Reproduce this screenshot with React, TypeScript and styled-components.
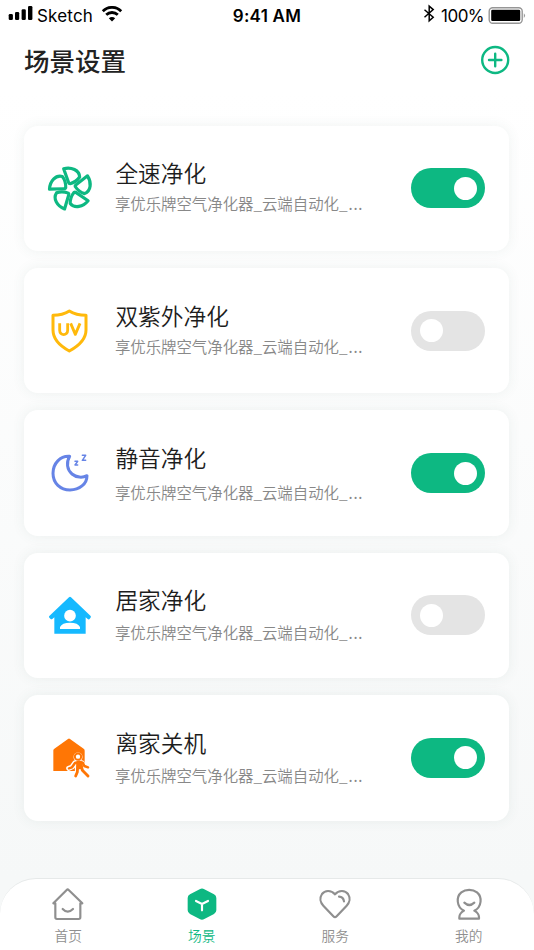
import React, { useState } from "react";
import styled, { createGlobalStyle } from "styled-components";

const GREEN = "#0db882";

const GlobalStyle = createGlobalStyle`
  * { box-sizing: border-box; }
  body { margin: 0; background: #fff; font-family: "Noto Sans CJK SC", sans-serif; }
`;

const Screen = styled.div`
  width: 534px;
  height: 950px;
  display: flex;
  flex-direction: column;
  overflow: hidden;
  background: linear-gradient(180deg, #ffffff 0, #ffffff 90px, #f6f8f8 880px);
`;

const StatusBar = styled.header`
  display: grid;
  grid-template-columns: 1fr auto 1fr;
  align-items: center;
  height: 32px;
  padding: 0 8px;
  color: #000;
  font-family: Inter, sans-serif;
  font-size: 17px;
  line-height: 32px;
`;

const StatusGroup = styled.div<{ $end?: boolean }>`
  display: flex;
  align-items: center;
  height: 32px;
  justify-content: ${(p) => (p.$end ? "flex-end" : "flex-start")};
`;

const Carrier = styled.span`
  width: 65px;
  padding-left: 4px;
  letter-spacing: 0.2px;
`;

const Clock = styled.span`
  font-weight: 600;
  letter-spacing: 0.25px;
`;

const Percent = styled.span`
  width: 48px;
  padding-left: 1px;
  letter-spacing: -0.5px;
`;

const Glyph = styled.svg<{ $w: number; $h: number }>`
  display: block;
  flex: none;
  width: ${(p) => p.$w}px;
  height: ${(p) => p.$h}px;
`;

const SignalGlyph = styled(Glyph)`
  margin-bottom: 6px;
`;

const TitleBar = styled.div`
  display: flex;
  align-items: center;
  justify-content: space-between;
  height: 56px;
  padding: 0 24px;
`;

const PageTitle = styled.h1`
  margin: 0;
  color: #222;
  font-size: 25.5px;
  font-weight: 500;
  line-height: 38px;
`;

const AddButton = styled.button`
  width: 30px;
  height: 30px;
  padding: 0;
  border: 0;
  background: none;
`;

const SceneList = styled.main`
  flex: 1;
  display: flex;
  flex-direction: column;
  gap: 17px;
  padding: 37.6px 24.6px 0 24.4px;
`;

const SceneCard = styled.section`
  display: flex;
  align-items: center;
  height: 125.4px;
  padding: 0 24px 0 16px;
  border-radius: 14px;
  background: #fff;
  box-shadow: 0 0 13px rgba(70, 100, 90, 0.08);
`;

const SceneText = styled.div`
  flex: 1;
  height: 90px;
  padding: 13px 0 0 5px;
`;

const SceneName = styled.h2`
  margin: 0;
  color: #1d1d1d;
  font-size: 22.7px;
  font-weight: 350;
  line-height: 33px;
`;

const SceneDescription = styled.p<{ $gap: number }>`
  margin: ${(p) => p.$gap}px 0 0 -0.5px;
  color: #888;
  font-size: 15.4px;
  font-weight: 350;
  line-height: 24px;
  white-space: nowrap;
`;

const Ellipsis = styled.span`
  margin-left: 1px;
  font-family: "Noto Sans", sans-serif;
  font-weight: 400;
  letter-spacing: 0.8px;
`;

const Switch = styled.button<{ $on: boolean }>`
  display: flex;
  align-items: center;
  justify-content: ${(p) => (p.$on ? "flex-end" : "flex-start")};
  width: 74px;
  height: 40px;
  padding: 0 8.5px;
  border: 0;
  border-radius: 20px;
  background: ${(p) => (p.$on ? GREEN : "#e4e4e4")};
`;

const Knob = styled.span`
  width: 23px;
  height: 23px;
  border-radius: 50%;
  background: #fff;
`;

const TabBar = styled.nav`
  display: grid;
  grid-template-columns: repeat(4, 1fr);
  height: 72px;
  border-top: 1px solid #e6e9e9;
  border-radius: 36px 36px 0 0;
  background: #fff;
`;

const Tab = styled.a<{ $active?: boolean }>`
  display: flex;
  flex-direction: column;
  align-items: center;
  padding-top: 6px;
  color: ${(p) => (p.$active ? GREEN : "#8f8f8f")};
  font-size: 13.7px;
  font-weight: 350;
  line-height: 20px;
  padding-left: 3px;
`;

const TabLabel = styled.span`
  margin-top: 1.5px;
`;

const BLADE = "M70 42 C93 36 117 46 118 67 Q108 82 89 87 Q86 87 85 84 Z";

function FanIcon() {
  return (
    <Glyph $w={70} $h={70} viewBox="-1 -5 210 210" fill="none" stroke={GREEN} strokeWidth="9.5" strokeLinejoin="round">
      {[0, 72, 144, 216, 288].map((a) => (
        <path key={a} d={BLADE} transform={`rotate(${a} 91 102)`} />
      ))}
    </Glyph>
  );
}

function ShieldIcon() {
  return (
    <Glyph $w={70} $h={70} viewBox="0 1 210 210" fill="none" stroke="#ffb90b" strokeLinejoin="round">
      <path d="M88 46 Q68 59 39 59 V103 C39 133 64 153 88 166 C112 153 138 133 138 103 V59 Q108 59 88 46 Z" strokeWidth="9" />
      <path d="M59 83 V104 C59 121 83 121 83 104 V83 M92 83 L106 116 L120 83" strokeWidth="8.5" />
    </Glyph>
  );
}

function MoonIcon() {
  return (
    <Glyph $w={70} $h={70} viewBox="0 -6 210 210" fill="none" stroke="#6684e6" strokeLinejoin="round" strokeLinecap="round">
      <path d="M89 49 C61 47 39 70 39 100 C39 130 61 150 90 150 C118 150 141 132 141 107 C128 114 109 113 96 102 C81 89 78 68 89 49 Z" strokeWidth="9" />
      <path d="M105 64 H113 L105 75 H113 M127 46 H137 L127 61 H137" strokeWidth="4.5" />
    </Glyph>
  );
}

function HomeIcon() {
  return (
    <Glyph $w={70} $h={70} viewBox="0 -14 210 210">
      <path d="M87 38 Q90 35 93 38 L152 94 Q154 97 151 100 L148 104 Q145 105 143 103 L137 98 V147 H43 V98 L37 103 Q34 105 31 102 L27 98 Q26 96 28 94 Z" fill="#15b9ff" />
      <circle cx="90" cy="93" r="17.5" fill="#fff" />
      <path d="M60 133 V127 Q66 114 90 114 Q114 114 120 127 V133 Z" fill="#fff" />
    </Glyph>
  );
}

function LeaveIcon() {
  return (
    <Glyph $w={70} $h={70} viewBox="0 -6 210 210" strokeLinejoin="round" strokeLinecap="round">
      <path d="M84 42 Q87 39 90 42 L132 72 Q134 74 134 77 V138 H40 V76 Q40 74 42 72 Z" fill="#ff7605" />
      <path d="M86 130 L96 126 L105 113 L126 113 L130 124 L145 127 M112 118 L112 141 L106 155 M124 120 L127 136 L145 155" fill="none" stroke="#fff" strokeWidth="15" />
      <circle cx="114" cy="96" r="13.5" fill="#fff" />
      <circle cx="114" cy="95" r="9.5" fill="#fff" stroke="#ff7605" strokeWidth="6" />
      <path d="M87 130 L96 127 L105 114 L118 110 L128 113 L133 123 L144 127" fill="none" stroke="#ff7605" strokeWidth="7.5" />
      <path d="M113 116 L112 141 L107 153 M123 119 L127 136 L144 153" fill="none" stroke="#ff7605" strokeWidth="8.5" />
      <path d="M110 112 L126 112 L130 136 L121 132 L110 135 Z" fill="#ff7605" />
    </Glyph>
  );
}

const scenes = [
  { name: "全速净化", icon: FanIcon, gap: 2, on: true },
  { name: "双紫外净化", icon: ShieldIcon, gap: 2.5, on: false },
  { name: "静音净化", icon: MoonIcon, gap: 5.9, on: true },
  { name: "居家净化", icon: HomeIcon, gap: 3.5, on: false },
  { name: "离家关机", icon: LeaveIcon, gap: 4.4, on: true },
];

function Scene({ name, icon: Icon, gap, on }: (typeof scenes)[number]) {
  const [active, setActive] = useState(on);
  return (
    <SceneCard>
      <Icon />
      <SceneText>
        <SceneName>{name}</SceneName>
        <SceneDescription $gap={gap}>
          享优乐牌空气净化器_云端自动化_<Ellipsis>...</Ellipsis>
        </SceneDescription>
      </SceneText>
      <Switch $on={active} role="switch" aria-checked={active} onClick={() => setActive(!active)}>
        <Knob />
      </Switch>
    </SceneCard>
  );
}

export default function App() {
  return (
    <>
      <GlobalStyle />
      <Screen>
        <StatusBar>
          <StatusGroup>
            <SignalGlyph $w={25} $h={16} viewBox="0 0 25 16">
              <rect x="0.7" y="9" width="4.2" height="6" rx="1.3" />
              <rect x="7" y="7" width="4.2" height="8" rx="1.3" />
              <rect x="13.6" y="4.2" width="4.2" height="10.8" rx="1.3" />
              <rect x="20" y="1" width="4.4" height="14" rx="1.3" />
            </SignalGlyph>
            <Carrier>Sketch</Carrier>
            <Glyph $w={28} $h={20} viewBox="0 5 28 20" fill="none" stroke="#000" strokeWidth="2.8">
              <path d="M4.8 10.2 C10 5.1 18 5.1 23.2 10.2 M8.2 13.8 C11.5 10.7 16.5 10.7 19.8 13.8" />
              <path d="M10.8 17.2 Q14 14.7 17.2 17.2 L14 20.4 Z" fill="#000" stroke="none" />
            </Glyph>
          </StatusGroup>
          <Clock>9:41 AM</Clock>
          <StatusGroup $end>
            <Glyph $w={17} $h={24} viewBox="0 1 17 24" fill="none" stroke="#000" strokeWidth="1.5">
              <path d="M1.5 6.8 L10.2 14.3 L6.2 17.8 V3.2 L10.2 6.6 L1.5 14.2" />
            </Glyph>
            <Percent>100%</Percent>
            <Glyph $w={38} $h={18} viewBox="0 2 38 18">
              <rect x="1.2" y="2.7" width="33" height="15.5" rx="3.5" fill="none" stroke="#969696" strokeWidth="1.4" />
              <rect x="3.2" y="4.8" width="29" height="11.3" rx="1.3" />
              <path d="M35.8 8.2 Q38.3 10.5 35.8 13 Z" fill="#999" />
            </Glyph>
          </StatusGroup>
        </StatusBar>
        <TitleBar>
          <PageTitle>场景设置</PageTitle>
          <AddButton aria-label="添加">
            <Glyph $w={30} $h={30} viewBox="0 0 30 30" fill="none" stroke={GREEN} strokeWidth="2.4" strokeLinecap="round">
              <circle cx="15.2" cy="15" r="13" />
              <path d="M15.2 8.8 V21.2 M9 15 H21.4" />
            </Glyph>
          </AddButton>
        </TitleBar>
        <SceneList>
          {scenes.map((s) => (
            <Scene key={s.name} {...s} />
          ))}
        </SceneList>
        <TabBar>
          <Tab>
            <Glyph $w={34} $h={38} viewBox="155 75 102 114" fill="none" stroke="currentColor" strokeWidth="6.5" strokeLinecap="round" strokeLinejoin="round">
              <path d="M168 130 H162 L202 90 Q205 87 208 90 L249 130 H243 V172 Q243 177 238 177 H173 Q168 177 168 172 Z" />
              <path d="M190 147 Q205 163 221 147" />
            </Glyph>
            <TabLabel>首页</TabLabel>
          </Tab>
          <Tab $active>
            <Glyph $w={34} $h={38} viewBox="556 75 102 114">
              <path d="M600 88 Q607 83 614 88 L643 103 Q650 107 650 114 V151 Q650 158 643 162 L614 177 Q607 181 600 177 L571 162 Q564 158 564 151 V114 Q564 107 571 103 Z" fill="currentColor" />
              <path d="M589 123 L607 132 L625 123 M607 132 V151" fill="none" stroke="#fff" strokeWidth="6.5" strokeLinecap="round" strokeLinejoin="round" />
            </Glyph>
            <TabLabel>场景</TabLabel>
          </Tab>
          <Tab>
            <Glyph $w={34} $h={38} viewBox="152 75 102 114" fill="none" stroke="currentColor" strokeWidth="6.5" strokeLinecap="round" strokeLinejoin="round">
              <path d="M203 103 C191 89 172 91 164 102 C156 114 159 128 168 137 L198 169 Q203 174 208 169 L238 137 C247 128 250 114 242 102 C234 91 215 89 203 103 Z" />
              <path d="M215 110 Q228 111 230 124" />
            </Glyph>
            <TabLabel>服务</TabLabel>
          </Tab>
          <Tab>
            <Glyph $w={34} $h={38} viewBox="554 75 102 114" fill="none" stroke="currentColor" strokeWidth="6.5" strokeLinecap="round" strokeLinejoin="round">
              <path d="M590 152 C567 141 566 110 582 97 C595 87 616 87 629 97 C645 110 644 141 621 152 Q635 160 635 172 V176 H576 V172 Q576 160 590 152 Z" />
              <path d="M591 128 Q606 142 621 128" />
            </Glyph>
            <TabLabel>我的</TabLabel>
          </Tab>
        </TabBar>
      </Screen>
    </>
  );
}
